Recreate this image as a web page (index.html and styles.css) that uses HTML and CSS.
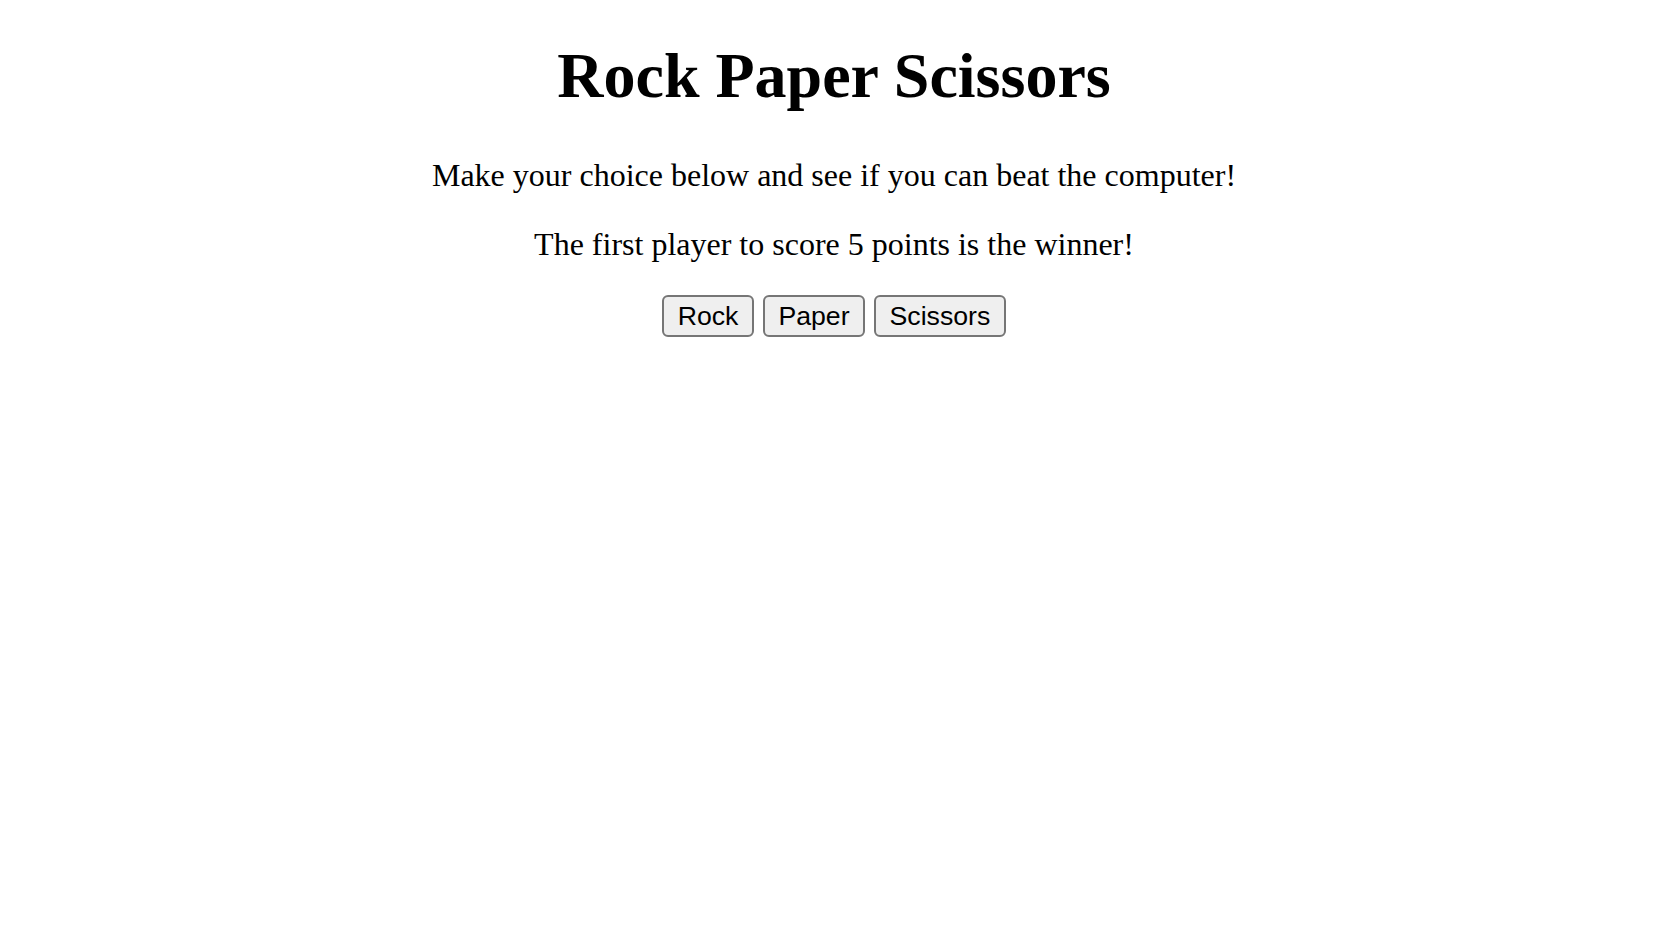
FILE: index.html
```html
<!DOCTYPE html>
<html lang="en">
<head>
<meta charset="utf-8">
<title>Rock Paper Scissors</title>
<link rel="stylesheet" href="styles.css">
</head>
<body>
<main class="game">
  <h1 class="title">Rock Paper Scissors</h1>
  <p class="intro">Make your choice below and see if you can beat the computer!</p>
  <p class="intro">The first player to score 5 points is the winner!</p>
  <div class="choices">
    <button class="choice" type="button">Rock</button>
    <button class="choice" type="button">Paper</button>
    <button class="choice" type="button">Scissors</button>
  </div>
</main>
</body>
</html>
```
FILE: styles.css
```css
html, body {
  margin: 0;
  padding: 0;
  background: #ffffff;
}

body {
  font-family: "Liberation Serif", "Times New Roman", serif;
  color: #000000;
}

.game {
  display: flex;
  flex-direction: column;
  align-items: center;
  padding-top: 39px;
}

.title {
  font-size: 64px;
  font-weight: bold;
  line-height: 73.6px;
  margin: 0 0 44px;
}

.intro {
  font-size: 32px;
  line-height: 36.8px;
  margin: 0 0 33px;
}

.choices {
  display: flex;
  justify-content: center;
  gap: 9px;
  margin-top: -1px;
}

.choice {
  font-family: "Liberation Sans", Arial, sans-serif;
  font-size: 26.67px;
  line-height: 31px;
  color: #000000;
  background: #efefef;
  border: 2px solid #767676;
  border-radius: 6px;
  padding: 3.5px 13.5px;
  margin: 0;
}
```
